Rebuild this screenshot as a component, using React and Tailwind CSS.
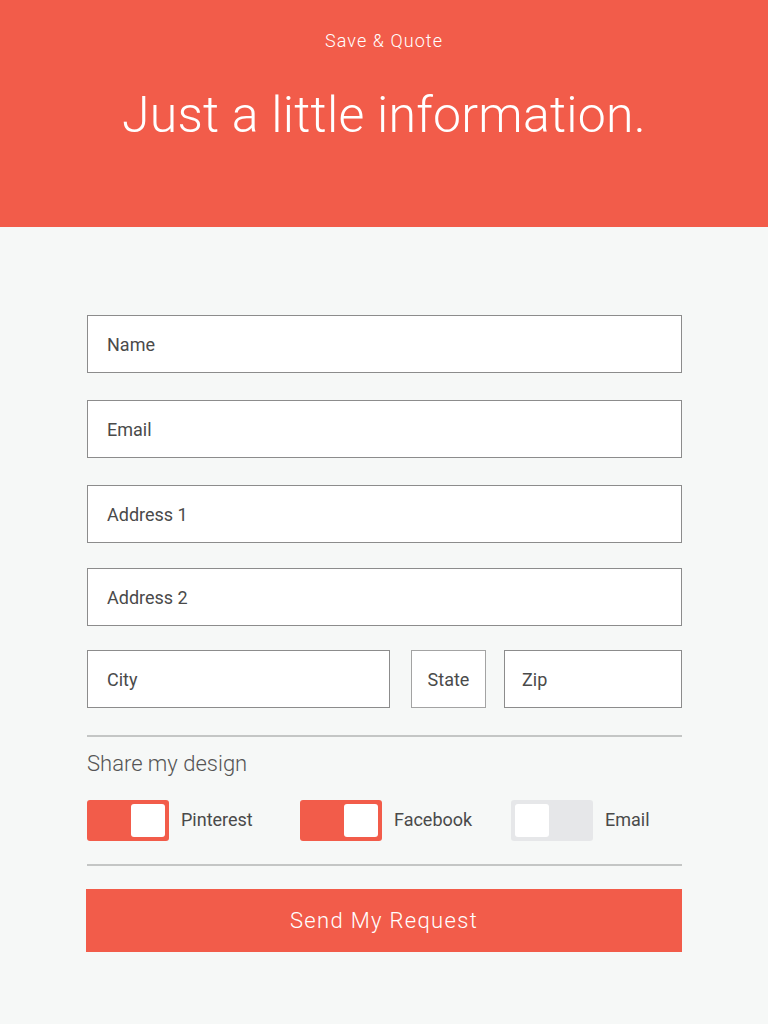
import React from "react";

const font = { fontFamily: "Roboto, 'Noto Sans', sans-serif" };

function Field({ label, className = "" }) {
  return (
    <div
      className={`h-[58px] bg-white border border-[#8c8c8c] flex items-center text-[18px] text-[#4a4a4a] ${className}`}
    >
      {label}
    </div>
  );
}

function Toggle({ on, label }) {
  return (
    <div className="flex items-center">
      <div
        className={`w-[82px] h-[41px] rounded-[3px] p-[4px] flex ${
          on ? "bg-[#f25c4a] justify-end" : "bg-[#e6e7e9] justify-start"
        }`}
      >
        <div className="w-[34px] h-[33px] bg-white rounded-[3px]" />
      </div>
      <span className="ml-[12px] -mt-[2px] text-[18px] text-[#4a4a4a]">{label}</span>
    </div>
  );
}

export default function App() {
  return (
    <div className="w-[768px] h-[1024px] bg-[#f6f8f7] font-['Roboto']" style={font}>
      <header className="h-[227px] bg-[#f25c4a] flex flex-col items-center text-white">
        <p className="mt-[27px] text-[18px] tracking-[0.06em] font-light">Save &amp; Quote</p>
        <h1 className="mt-[36px] text-[50px] font-light leading-none tracking-[0.005em]">
          Just a little information.
        </h1>
      </header>

      <main className="pl-[87px] pr-[86px] pt-[88px]">
        <div className="flex flex-col gap-[27px]">
          <Field label="Name" className="pl-[19px]" />
          <Field label="Email" className="pl-[19px]" />
          <Field label="Address 1" className="pl-[19px]" />
        </div>
        <div className="flex flex-col gap-[24px] mt-[25px]">
          <Field label="Address 2" className="pl-[19px]" />
          <div className="flex">
            <Field label="City" className="w-[303px] pl-[19px]" />
            <Field label="State" className="w-[75px] ml-[21px] justify-center border-[#a3a3a3]" />
            <Field label="Zip" className="w-[178px] ml-[18px] pl-[17px]" />
          </div>
        </div>

        <div className="mt-[27px] border-t-2 border-[#c4c6c5]" />
        <p className="mt-[10px] text-[22px] text-[#555] font-light">Share my design</p>

        <div className="mt-[20px] flex">
          <div className="w-[213px]"><Toggle on label="Pinterest" /></div>
          <div className="w-[211px]"><Toggle on label="Facebook" /></div>
          <Toggle on={false} label="Email" />
        </div>

        <div className="mt-[23px] border-t-2 border-[#c4c6c5]" />

        <button className="mt-[23px] -ml-px w-[596px] h-[63px] bg-[#f25c4a] text-white text-[22px] tracking-[0.06em] font-light">
          Send My Request
        </button>
      </main>
    </div>
  );
}
